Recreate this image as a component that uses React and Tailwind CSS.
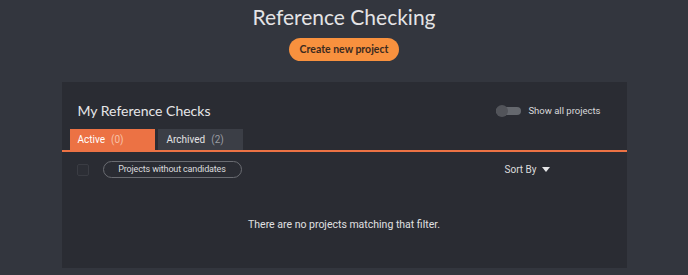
export default function App() {
  return (
    <div className="h-[275px] w-[688px] overflow-hidden bg-[#33363e] font-['Roboto',sans-serif]">
      <div className="flex h-[82px] flex-col items-center pt-[3px]">
        <h1 className="font-['Lato',sans-serif] text-[21px] leading-[28px] text-[#e4e4e6]">Reference Checking</h1>
        <button className="mt-[7px] h-[23px] rounded-full bg-[#f8913e] px-[11px] font-['Lato',sans-serif] text-[10.5px] font-bold text-[#3a2a1e]">
          Create new project
        </button>
      </div>
      <div className="mx-auto h-[186px] w-[565px] bg-[#2a2c33]">
        <div className="flex items-center justify-between pl-[16px] pr-[26px] pt-[18px]">
          <h2 className="font-['Lato',sans-serif] text-[14px] leading-[22px] text-[#e6e6e8]">My Reference Checks</h2>
          <div className="flex items-center gap-[7px]">
            <div className="relative h-[8px] w-[25px] rounded-full bg-[#65686e]">
              <div className="absolute left-0 top-[-2px] h-[12px] w-[12px] rounded-full bg-[#52545a]" />
            </div>
            <span className="text-[9.5px] text-[#d8d8da]">Show all projects</span>
          </div>
        </div>
        <div className="mt-[7px] flex gap-[3px] pl-[8px]">
          <div className="flex h-[21px] w-[85px] items-center gap-[6px] bg-[#ec7244] pl-[8px] text-[10px] text-white">
            Active <span className="text-[#f7c2a8]">(0)</span>
          </div>
          <div className="flex h-[21px] w-[85px] items-center gap-[6px] bg-[#3b3e46] pl-[9px] text-[10px] text-[#e2e2e4]">
            Archived <span className="text-[#9a9ca2]">(2)</span>
          </div>
        </div>
        <div className="h-[2px] bg-[#ec7244]" />
        <div className="flex items-center pl-[15px] pr-[80px] pt-[9px]">
          <div className="h-[12px] w-[12px] rounded-[2px] border border-[#3a3c43] bg-[#2c2e35]" />
          <div className="ml-[14px] flex h-[17px] w-[139px] items-center justify-center rounded-full border border-[#6a6c72] text-[9px] tracking-[-0.15px] text-[#dcdcde]">
            Projects without candidates
          </div>
          <div className="ml-auto mr-[-3px] flex items-center gap-[5px] text-[10px] text-[#dcdcde]">
            Sort By
            <svg width="8" height="5" viewBox="0 0 8 5"><path d="M0 0h8L4 5z" fill="#e6e6e8" /></svg>
          </div>
        </div>
        <p className="mt-[39px] text-center text-[10.5px] text-[#e0e0e2]">There are no projects matching that filter.</p>
      </div>
    </div>
  );
}
